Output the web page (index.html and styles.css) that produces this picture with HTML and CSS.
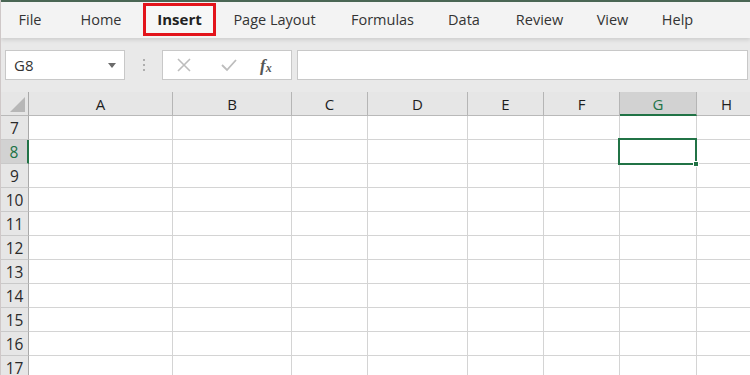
FILE: index.html
```html
<!DOCTYPE html>
<html>
<head>
<meta charset="utf-8">
<link rel="stylesheet" href="styles.css">
</head>
<body>
<div class="app">
  <div class="ribbon">
    <div class="tab w59">File</div>
    <div class="tab w85">Home</div>
    <div class="tab w70 active">Insert</div>
    <div class="tab w120">Page Layout</div>
    <div class="tab w99">Formulas</div>
    <div class="tab w64">Data</div>
    <div class="tab w87">Review</div>
    <div class="tab w59">View</div>
    <div class="tab w71">Help</div>
  </div>
  <div class="fbar">
    <div class="namebox"><span>G8</span><span class="caret"></span></div>
    <div class="dots"><i></i><i></i><i></i></div>
    <div class="fbtns">
      <svg class="ico" width="16" height="16" viewBox="0 0 16 16"><path d="M2 2 L14 14 M14 2 L2 14" stroke="#bdbdbd" stroke-width="1.6" fill="none"/></svg>
      <svg class="ico" width="18" height="16" viewBox="0 0 18 16"><path d="M2 8 L7 13 L16 3" stroke="#bdbdbd" stroke-width="1.8" fill="none"/></svg>
      <span class="fx">f<sub>x</sub></span>
    </div>
    <div class="finput"></div>
  </div>
  <div class="sheet">
    <div class="corner"><span class="tri"></span></div>
    <div class="ch">A</div><div class="ch">B</div><div class="ch">C</div><div class="ch">D</div><div class="ch">E</div><div class="ch">F</div><div class="ch sel">G</div><div class="ch">H</div>

    <div class="rh">7</div><div class="c"></div><div class="c"></div><div class="c"></div><div class="c"></div><div class="c"></div><div class="c"></div><div class="c"></div><div class="c"></div>
    <div class="rh sel">8</div><div class="c"></div><div class="c"></div><div class="c"></div><div class="c"></div><div class="c"></div><div class="c"></div><div class="c active"><div class="selbox"><span class="handle"></span></div></div><div class="c"></div>
    <div class="rh">9</div><div class="c"></div><div class="c"></div><div class="c"></div><div class="c"></div><div class="c"></div><div class="c"></div><div class="c"></div><div class="c"></div>
    <div class="rh">10</div><div class="c"></div><div class="c"></div><div class="c"></div><div class="c"></div><div class="c"></div><div class="c"></div><div class="c"></div><div class="c"></div>
    <div class="rh">11</div><div class="c"></div><div class="c"></div><div class="c"></div><div class="c"></div><div class="c"></div><div class="c"></div><div class="c"></div><div class="c"></div>
    <div class="rh">12</div><div class="c"></div><div class="c"></div><div class="c"></div><div class="c"></div><div class="c"></div><div class="c"></div><div class="c"></div><div class="c"></div>
    <div class="rh">13</div><div class="c"></div><div class="c"></div><div class="c"></div><div class="c"></div><div class="c"></div><div class="c"></div><div class="c"></div><div class="c"></div>
    <div class="rh">14</div><div class="c"></div><div class="c"></div><div class="c"></div><div class="c"></div><div class="c"></div><div class="c"></div><div class="c"></div><div class="c"></div>
    <div class="rh">15</div><div class="c"></div><div class="c"></div><div class="c"></div><div class="c"></div><div class="c"></div><div class="c"></div><div class="c"></div><div class="c"></div>
    <div class="rh">16</div><div class="c"></div><div class="c"></div><div class="c"></div><div class="c"></div><div class="c"></div><div class="c"></div><div class="c"></div><div class="c"></div>
    <div class="rh">17</div><div class="c"></div><div class="c"></div><div class="c"></div><div class="c"></div><div class="c"></div><div class="c"></div><div class="c"></div><div class="c"></div>
  </div>
</div>
</body>
</html>
```

FILE: styles.css
```css
* { box-sizing: border-box; }
html, body { margin: 0; padding: 0; }
body {
  width: 750px;
  height: 375px;
  overflow: hidden;
  font-family: "Open Sans", "Noto Sans", sans-serif;
  background: #e8e8e8;
}
.app {
  width: 750px;
  height: 375px;
  overflow: hidden;
  border-left: 1px solid #cfc8c8;
}
.ribbon {
  height: 38px;
  border-top: 2px solid #4a6654;
  background: #f3f3f3;
  display: flex;
  align-items: stretch;
  box-shadow: 0 2px 4px rgba(0,0,0,0.12);
  position: relative;
  z-index: 1;
}
.tab {
  display: flex;
  align-items: center;
  justify-content: center;
  font-size: 14.5px;
  color: #333;
  padding-bottom: 2px;
}
.tab.active {
  font-weight: 700;
  font-size: 15px;
  color: #222;
  border: 3px solid #e3141b;
  margin: 1px 0 2px;
  background: #f7f7f7;
}
.w59 { width: 59px; }
.w85 { width: 85px; }
.w70 { width: 73px; }
.w120 { width: 117px; }
.w99 { width: 99px; }
.w64 { width: 64px; }
.w87 { width: 87px; }
.w71 { width: 71px; }
.ribbon .tab:first-child { width: 58px; }
.ribbon .tab:nth-child(2) { width: 84px; }

.fbar {
  height: 54px;
  display: flex;
  align-items: flex-start;
  padding: 12px 2px 0 4px;
  background: #e9e9e9;
}
.namebox {
  width: 120px;
  height: 30px;
  background: #fff;
  border: 1px solid #c8c8c8;
  display: flex;
  align-items: center;
  justify-content: space-between;
  padding: 0 8px 0 8px;
  font-size: 15px;
  color: #333;
}
.caret {
  width: 0; height: 0;
  border-left: 4.5px solid transparent;
  border-right: 4.5px solid transparent;
  border-top: 5px solid #6b6b6b;
}
.dots {
  width: 37px;
  height: 30px;
  display: flex;
  flex-direction: column;
  align-items: center;
  justify-content: center;
  gap: 3px;
}
.dots i {
  width: 2px; height: 2px;
  background: #9a9a9a;
  border-radius: 1px;
}
.fbtns {
  width: 130px;
  height: 30px;
  background: #fff;
  border: 1px solid #c8c8c8;
  display: flex;
  align-items: center;
  padding: 0 0 0 13px;
  gap: 0;
}
.fbtns .ico:first-child { margin-right: 28px; }
.fbtns .ico:nth-child(2) { margin-right: 22px; }
.fx {
  font-family: "Liberation Serif", "DejaVu Serif", serif;
  font-style: italic;
  font-weight: 700;
  font-size: 17px;
  color: #555;
  line-height: 1;
}
.fx sub {
  font-size: 12px;
  vertical-align: -1px;
}
.finput {
  flex: 1;
  height: 30px;
  margin-left: 5px;
  background: #fff;
  border: 1px solid #c8c8c8;
}

.sheet {
  display: grid;
  grid-template-columns: 28px 144px 119px 76px 100px 76px 76px 77px 60px;
  grid-template-rows: 24px repeat(11, 24px);
  background: #fff;
}
.corner {
  background: #e6e6e6;
  border-right: 1px solid #a9a9a9;
  border-bottom: 1px solid #b9b9b9;
  position: relative;
}
.tri {
  position: absolute;
  right: 3px;
  bottom: 3px;
  width: 0; height: 0;
  border-left: 15px solid transparent;
  border-bottom: 15px solid #b7b7b7;
}
.ch {
  background: #e6e6e6;
  border-right: 1px solid #b5b5b5;
  border-bottom: 1px solid #b9b9b9;
  display: flex;
  align-items: center;
  justify-content: center;
  font-size: 15px;
  color: #1e1e1e;
  padding-top: 1px;
}
.ch.sel {
  background: #d2d2d2;
  color: #217346;
  border-bottom: 2px solid #217346;
  padding-top: 2px;
}
.rh {
  background: #e6e6e6;
  border-right: 1px solid #a9a9a9;
  border-bottom: 1px solid #c9c9c9;
  display: flex;
  align-items: center;
  justify-content: center;
  font-size: 15.5px;
  color: #2a2a2a;
  padding-top: 1px;
}
.rh.sel {
  background: #d2d2d2;
  color: #217346;
  border-right: 2px solid #217346;
}
.c {
  border-right: 1px solid #d4d4d4;
  border-bottom: 1px solid #d4d4d4;
}
.c.active { position: relative; }
.selbox {
  position: absolute;
  left: -2px;
  top: -2px;
  right: -1px;
  bottom: -2px;
  border: 2px solid #217346;
}
.handle {
  position: absolute;
  right: -4px;
  bottom: -4px;
  width: 6px;
  height: 6px;
  background: #217346;
  border: 1px solid #fff;
}
```
